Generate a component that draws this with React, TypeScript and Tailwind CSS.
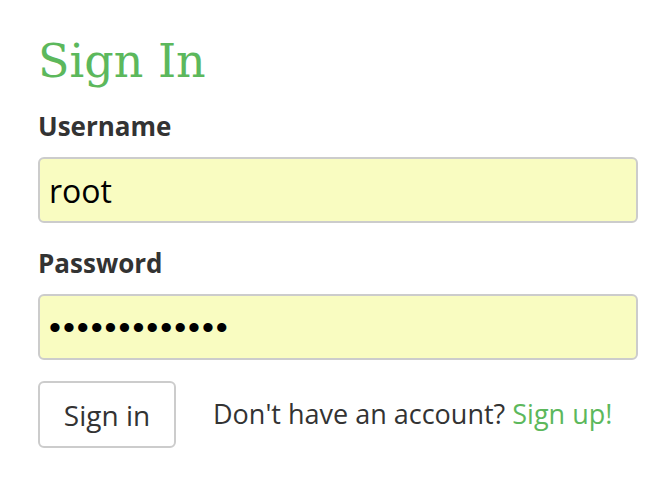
export default function App() {
  return (
    <div className="w-[672px] h-[496px] bg-white px-[38px] pt-[27px]" style={{ fontFamily: '"Open Sans", "Noto Sans", sans-serif' }}>
      <h1 className="text-[46px] leading-[68px] text-[#5cb85c]" style={{ fontFamily: '"DejaVu Serif", serif' }}>Sign In</h1>
      <div className="mt-[14px] text-[26px] leading-[34px] font-bold text-[#333]">Username</div>
      <input
        readOnly
        value="root"
        className="mt-[14px] block w-[600px] h-[66px] px-[9px] rounded-[6px] border-2 border-[#ccc] bg-[#f9fcc1] text-[32px] text-black outline-none"
      />
      <div className="mt-[23px] text-[26px] leading-[34px] font-bold text-[#333]">Password</div>
      <input
        readOnly
        type="password"
        value="aaaaaaaaaaaaa"
        className="mt-[14px] block w-[600px] h-[66px] px-[9px] rounded-[6px] border-2 border-[#ccc] bg-[#f9fcc1] text-[34px] tracking-[2px] text-black outline-none"
        style={{ fontFamily: '"Liberation Sans", sans-serif' }}
      />
      <div className="mt-[21px] flex items-center">
        <button className="w-[138px] h-[67px] rounded-[6px] border-2 border-[#ccc] bg-white text-[28px] text-[#333]">Sign in</button>
        <span className="ml-[37px] text-[27px] text-[#333]">
          Don't have an account? <span className="text-[#5cb85c]">Sign up!</span>
        </span>
      </div>
    </div>
  );
}
